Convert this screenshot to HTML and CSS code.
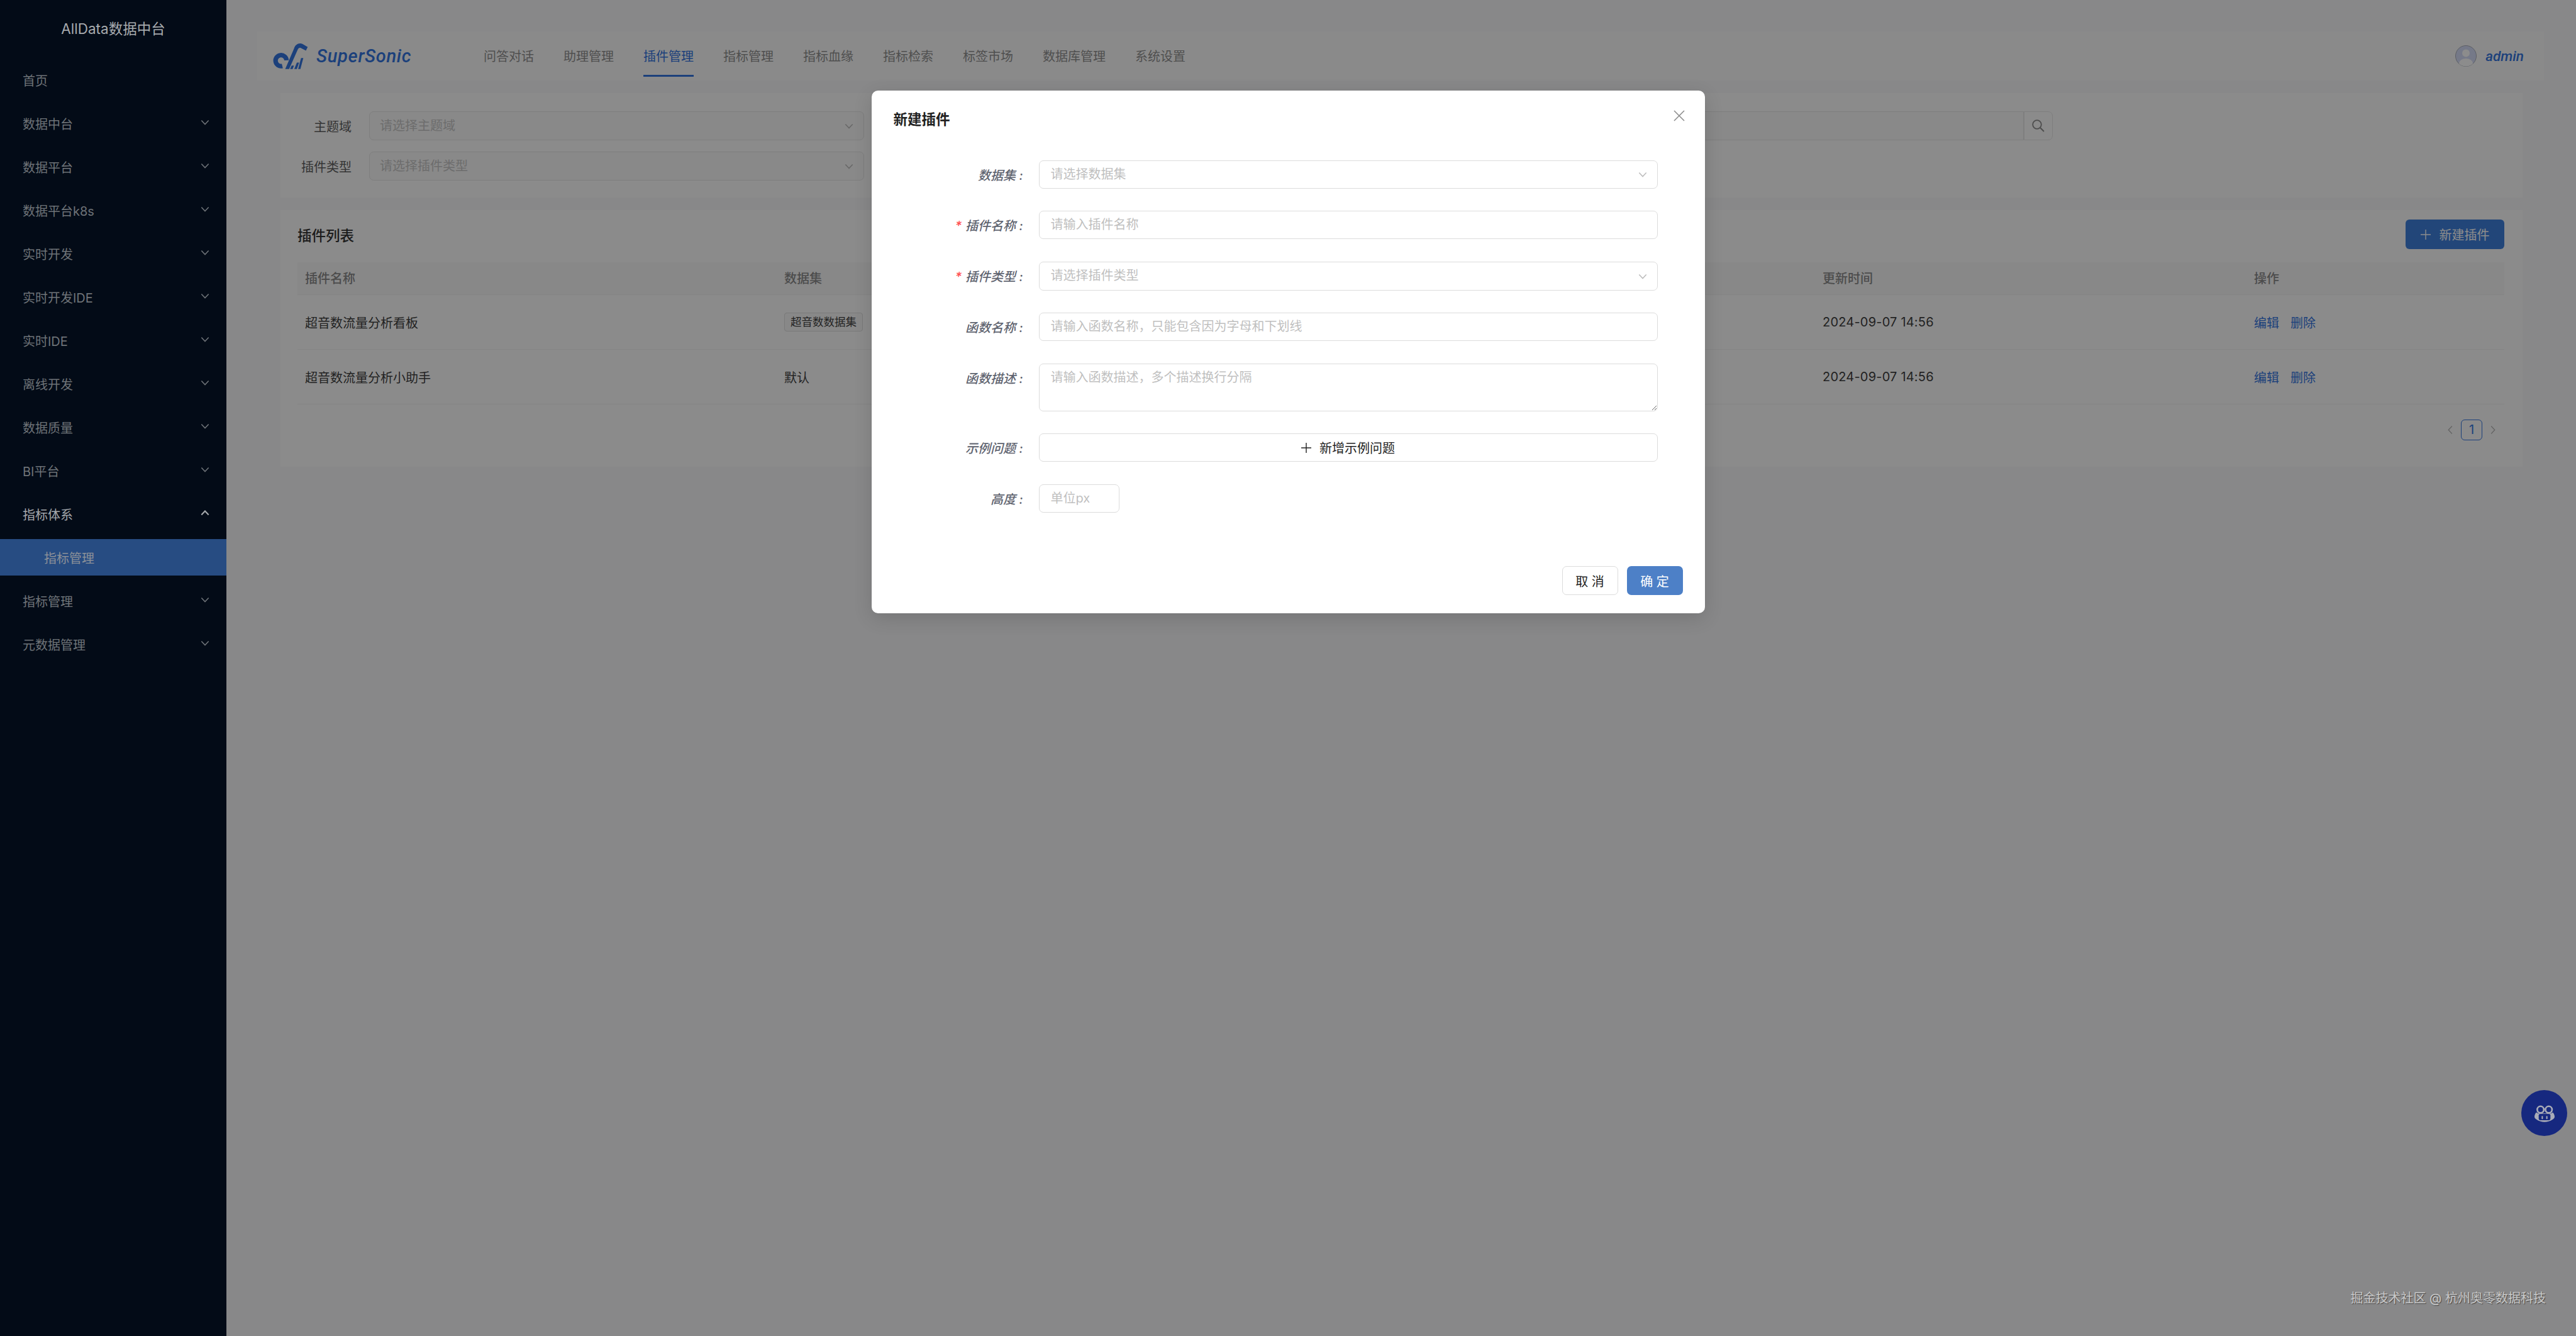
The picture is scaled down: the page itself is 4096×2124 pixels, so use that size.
FILE: index.html
```html
<!DOCTYPE html>
<html lang="zh-CN">
<head>
    <meta charset="UTF-8">
    <title>AllData数据中台</title>
    <link rel="stylesheet" href="styles.css">
</head>
<body>
    <svg class="sprite" aria-hidden="true">
        <symbol id="down" viewBox="0 0 16 10"><path d="M1.5 1.5 8 8.5l6.5-7" fill="none" stroke="currentColor" stroke-width="1.8"/></symbol>
        <symbol id="up" viewBox="0 0 16 10"><path d="M1.5 8.5 8 1.5l6.5 7" fill="none" stroke="currentColor" stroke-width="2.4"/></symbol>
        <symbol id="plus" viewBox="0 0 16 16"><path d="M8 0v16M0 8h16" fill="none" stroke="currentColor" stroke-width="1.4"/></symbol>
    </svg>

    <aside class="sidebar">
        <div class="side-title">AllData数据中台</div>
        <div class="side-item">首页</div>
        <div class="side-item">数据中台<svg class="side-arrow"><use href="#down"/></svg></div>
        <div class="side-item">数据平台<svg class="side-arrow"><use href="#down"/></svg></div>
        <div class="side-item">数据平台k8s<svg class="side-arrow"><use href="#down"/></svg></div>
        <div class="side-item">实时开发<svg class="side-arrow"><use href="#down"/></svg></div>
        <div class="side-item">实时开发IDE<svg class="side-arrow"><use href="#down"/></svg></div>
        <div class="side-item">实时IDE<svg class="side-arrow"><use href="#down"/></svg></div>
        <div class="side-item">离线开发<svg class="side-arrow"><use href="#down"/></svg></div>
        <div class="side-item">数据质量<svg class="side-arrow"><use href="#down"/></svg></div>
        <div class="side-item">BI平台<svg class="side-arrow"><use href="#down"/></svg></div>
        <div class="side-item side-open">指标体系<svg class="side-arrow"><use href="#up"/></svg></div>
        <div class="side-item side-sub">指标管理</div>
        <div class="side-item">指标管理<svg class="side-arrow"><use href="#down"/></svg></div>
        <div class="side-item">元数据管理<svg class="side-arrow"><use href="#down"/></svg></div>
    </aside>

    <main class="main">
        <header class="header">
            <svg class="logo" viewBox="60 60 222 166">
                <path d="M122 203A34 34 0 1 1 148 168" fill="none" stroke="currentColor" stroke-width="28"/>
                <path d="M140 222 194 96C202 70 224 58 246 66L279 86 268 108 238 92C228 88 222 92 218 100L164 222Z" fill="currentColor"/>
                <path d="M170 222 180 200H194L186 222ZM196 222 212 182H226L212 222ZM220 222 238 154H252L234 222Z" fill="currentColor"/>
            </svg>
            <span class="brand">SuperSonic</span>
            <nav class="nav">
                <a class="nav-item">问答对话</a>
                <a class="nav-item">助理管理</a>
                <a class="nav-item nav-active">插件管理</a>
                <a class="nav-item">指标管理</a>
                <a class="nav-item">指标血缘</a>
                <a class="nav-item">指标检索</a>
                <a class="nav-item">标签市场</a>
                <a class="nav-item">数据库管理</a>
                <a class="nav-item">系统设置</a>
            </nav>
            <div class="user">
                <svg class="avatar" viewBox="0 0 34 34">
                    <defs><clipPath id="avatarClip"><circle cx="17" cy="17" r="16.5"/></clipPath></defs>
                    <circle cx="17" cy="17" r="16.5" fill="#d6dcf8" stroke="#a9aeb8"/>
                    <g clip-path="url(#avatarClip)" fill="#fff">
                        <circle cx="17" cy="12.5" r="6"/>
                        <ellipse cx="17" cy="29" rx="11" ry="8"/>
                    </g>
                </svg>
                <span class="user-name">admin</span>
            </div>
        </header>

        <section class="panel filter">
            <div class="filter-row">
                <label class="filter-label">主题域</label>
                <div class="filter-select">请选择主题域<svg class="select-arrow"><use href="#down"/></svg></div>
                <div class="filter-search">
                    <div class="search-input"></div>
                    <div class="search-btn">
                        <svg class="search-icon" viewBox="0 0 22 22"><circle cx="9" cy="9" r="6.8" fill="none" stroke="currentColor" stroke-width="1.8"/><path d="m14 14 6 6" stroke="currentColor" stroke-width="2"/></svg>
                    </div>
                </div>
            </div>
            <div class="filter-row">
                <label class="filter-label">插件类型</label>
                <div class="filter-select">请选择插件类型<svg class="select-arrow"><use href="#down"/></svg></div>
            </div>
        </section>

        <section class="panel list">
            <div class="list-head">
                <h2 class="list-title">插件列表</h2>
                <button class="new-btn"><svg class="plus"><use href="#plus"/></svg>新建插件</button>
            </div>
            <div class="table-row table-head">
                <div>插件名称</div><div>数据集</div><div>更新时间</div><div>操作</div>
            </div>
            <div class="table-row">
                <div>超音数流量分析看板</div>
                <div><span class="tag">超音数数据集</span></div>
                <div class="date">2024-09-07 14:56</div>
                <div class="ops"><a>编辑</a><a>删除</a></div>
            </div>
            <div class="table-row">
                <div>超音数流量分析小助手</div>
                <div>默认</div>
                <div class="date">2024-09-07 14:56</div>
                <div class="ops"><a>编辑</a><a>删除</a></div>
            </div>
            <div class="pager">
                <svg class="pager-arrow" viewBox="0 0 10 18"><path d="M8.5 1.5 1.5 9l7 7.5" fill="none" stroke="currentColor" stroke-width="1.6"/></svg>
                <span class="pager-num">1</span>
                <svg class="pager-arrow" viewBox="0 0 10 18"><path d="M1.5 1.5 8.5 9l-7 7.5" fill="none" stroke="currentColor" stroke-width="1.6"/></svg>
            </div>
        </section>

        <div class="mask"></div>

        <div class="fab">
            <svg class="fab-icon" viewBox="0 0 110 95">
                <circle cx="33" cy="27" r="18" fill="none" stroke="currentColor" stroke-width="9"/>
                <circle cx="78" cy="27" r="18" fill="none" stroke="currentColor" stroke-width="9"/>
                <path fill="currentColor" d="M10 42C2 50 0 60 0 66 0 72 4 76 12 82 26 91 40 95 55 95 70 95 84 91 98 82 106 76 110 72 110 66 110 60 108 50 100 42L90 48H20Z"/>
                <rect class="fab-face" x="23" y="51" width="64" height="34" rx="8"/>
                <rect fill="currentColor" x="39" y="62" width="7" height="17" rx="3"/>
                <rect fill="currentColor" x="64" y="62" width="7" height="17" rx="3"/>
            </svg>
        </div>
    </main>

    <div class="modal-wrap">
        <div class="modal">
            <h3 class="modal-title">新建插件</h3>
            <svg class="modal-close" viewBox="0 0 18 18"><path d="m1 1 16 16M17 1 1 17" fill="none" stroke="currentColor" stroke-width="1.6"/></svg>
            <div class="form">
                <div class="form-row">
                    <label class="form-label">数据集 :</label>
                    <div class="field">请选择数据集<svg class="select-arrow"><use href="#down"/></svg></div>
                </div>
                <div class="form-row">
                    <label class="form-label"><span class="star">*</span>插件名称 :</label>
                    <div class="field">请输入插件名称</div>
                </div>
                <div class="form-row">
                    <label class="form-label"><span class="star">*</span>插件类型 :</label>
                    <div class="field field-tall">请选择插件类型<svg class="select-arrow"><use href="#down"/></svg></div>
                </div>
                <div class="form-row">
                    <label class="form-label">函数名称 :</label>
                    <div class="field">请输入函数名称，只能包含因为字母和下划线</div>
                </div>
                <div class="form-row">
                    <label class="form-label">函数描述 :</label>
                    <div class="field field-area">请输入函数描述，多个描述换行分隔</div>
                </div>
                <div class="form-row">
                    <label class="form-label">示例问题 :</label>
                    <button class="add-btn"><svg class="plus"><use href="#plus"/></svg>新增示例问题</button>
                </div>
                <div class="form-row">
                    <label class="form-label">高度 :</label>
                    <div class="field field-small">单位px</div>
                </div>
            </div>
            <div class="modal-foot">
                <button class="foot-btn">取 消</button>
                <button class="foot-btn foot-primary">确 定</button>
            </div>
        </div>
    </div>

    <div class="watermark">掘金技术社区 @ 杭州奥零数据科技</div>
</body>
</html>
```

FILE: styles.css
```css
* {
    box-sizing: border-box;
}
html, body {
    margin: 0;
    height: 100%;
}
body {
    width: 4096px;
    height: 2124px;
    display: flex;
    position: relative;
    overflow: hidden;
    font-family: "Inter", "Noto Sans CJK SC", sans-serif;
    font-size: 20px;
    color: #3f3f3f;
    background: #f7f8fa;
}
.sprite {
    display: none;
}
button {
    font: inherit;
    cursor: pointer;
}

/* sidebar */
.sidebar {
    width: 360px;
    flex: none;
    background: #030b17;
    color: #6e7378;
    display: flex;
    flex-direction: column;
    gap: 11px;
}
.side-title {
    height: 87px;
    line-height: 92px;
    text-align: center;
    font-size: 22.5px;
    color: #a8abaf;
}
.side-item {
    height: 58px;
    flex: none;
    padding-left: 36px;
    display: flex;
    align-items: center;
    position: relative;
}
.side-open {
    color: #a5a8ac;
}
.side-sub {
    padding-left: 70px;
    background: #274c82;
    color: #8b9098;
}
.side-arrow {
    width: 14px;
    height: 9px;
    position: absolute;
    right: 27px;
    top: 23px;
}

/* main area, dimmed by the mask */
.main {
    flex: 1;
    position: relative;
    height: 2124px;
}
.mask {
    position: absolute;
    inset: 0;
    background: rgba(0, 0, 0, 0.45);
}
.header {
    height: 78px;
    margin: 50px 51px 0 49px;
    padding: 0 32px 0 24px;
    background: #fcfcfc;
    display: flex;
    align-items: center;
}
.logo {
    width: 57px;
    height: 43px;
    color: #3375e0;
    flex: none;
}
.brand {
    margin-left: 13px;
    width: 153px;
    font-size: 29px;
    font-style: italic;
    font-weight: 500;
    letter-spacing: 0.7px;
    color: #3375e0;
    font-family: "Roboto", sans-serif;
}
.nav {
    margin-left: 113px;
    margin-top: 4px;
    display: flex;
    gap: 47px;
}
.nav-item {
    height: 62px;
    padding-top: 2px;
    line-height: 57px;
    color: #909090;
    border-bottom: 3px solid transparent;
}
.nav-active {
    color: #3375e0;
    border-bottom-color: #3375e0;
}
.user {
    margin-left: auto;
    display: flex;
    align-items: center;
    gap: 14px;
}
.avatar {
    width: 34px;
    height: 34px;
}
.user-name {
    font-size: 22.5px;
    font-style: italic;
    font-weight: 500;
    color: #3375e0;
    font-family: "Roboto", sans-serif;
}

.panel {
    margin: 20px 85px 0 86px;
    background: #fdfdfd;
}
.filter {
    height: 166px;
    padding-top: 29px;
    display: flex;
    flex-direction: column;
    gap: 18px;
}
.filter-row {
    display: flex;
    align-items: center;
    height: 46px;
}
.filter-label {
    width: 113px;
    text-align: right;
    margin-right: 28px;
    color: #606060;
}
.filter-select {
    width: 787px;
    height: 46px;
    padding-left: 16px;
    line-height: 44px;
    border: 1px solid #e6e6e6;
    border-radius: 7px;
    background: #f9f9f9;
    color: #c6c6c6;
    position: relative;
}
.filter-search {
    margin-left: 20px;
    width: 1870px;
    display: flex;
}
.search-input {
    flex: 1;
    height: 46px;
    border: 1px solid #e6e6e6;
    background: #f9f9f9;
}
.search-btn {
    width: 46px;
    height: 46px;
    border: 1px solid #e6e6e6;
    border-radius: 0 7px 7px 0;
    display: flex;
    align-items: center;
    justify-content: center;
    color: #8c8c8c;
}
.search-icon {
    width: 22px;
    height: 22px;
}
.select-arrow {
    width: 14px;
    height: 9px;
    color: #bdbdbd;
    position: absolute;
    right: 16px;
    top: 50%;
    margin-top: -4px;
}

/* table */
.list {
    height: 408px;
    padding: 15px 29px 0 27px;
}
.list-head {
    height: 47px;
    margin-bottom: 21px;
    display: flex;
    align-items: center;
    justify-content: space-between;
}
.list-title {
    margin: 0;
    font-size: 22.5px;
    font-weight: 500;
    color: #333;
}
.new-btn {
    width: 157px;
    height: 47px;
    border: 0;
    border-radius: 6px;
    background: #3f80dc;
    color: #fff;
    display: flex;
    align-items: center;
    justify-content: center;
    gap: 14px;
}
.plus {
    width: 16px;
    height: 16px;
}
.table-row {
    display: grid;
    grid-template-columns: 762px 1651px 686px 410px;
    align-items: center;
    height: 87px;
    border-bottom: 1px solid #f0f0f0;
}
.table-row > div {
    padding-left: 12px;
}
.table-head {
    height: 52px;
    padding-bottom: 3px;
    background: #f8f8f8;
    font-weight: 500;
    color: #8a8a8a;
}
.tag {
    display: inline-block;
    height: 30px;
    width: 125px;
    line-height: 28px;
    text-align: center;
    font-size: 17.5px;
    background: #f8f8f8;
    border: 1px solid #dcdcdc;
    border-radius: 4px;
}
.date {
    letter-spacing: 0.2px;
}
.ops {
    display: flex;
    gap: 18px;
    color: #3375e0;
}
.pager {
    margin-top: 24px;
    padding-right: 14px;
    display: flex;
    align-items: center;
    justify-content: flex-end;
    gap: 13px;
    color: #b5b5b5;
}
.pager-arrow {
    width: 8px;
    height: 15px;
}
.pager-num {
    width: 34px;
    height: 33px;
    line-height: 31px;
    text-align: center;
    border: 1px solid #3375e0;
    border-radius: 6px;
    color: #3375e0;
}

.fab {
    position: absolute;
    right: 14px;
    top: 1733px;
    width: 73px;
    height: 73px;
    border-radius: 50%;
    background: #16287f;
    display: flex;
    align-items: center;
    justify-content: center;
    color: #a9acb8;
}
.fab-icon {
    width: 32px;
    height: 28px;
}
.fab-face {
    fill: #16287f;
}

/* modal */
.modal-wrap {
    position: absolute;
    inset: 0;
    padding-top: 144px;
    display: flex;
    justify-content: center;
    align-items: flex-start;
}
.modal {
    width: 1325px;
    height: 831px;
    background: #fff;
    border-radius: 10px;
    box-shadow: 0 8px 30px rgba(0, 0, 0, 0.14);
    padding: 0 35px 29px;
    position: relative;
}
.modal-title {
    margin: 0;
    height: 110.5px;
    padding-top: 31px;
    line-height: 30px;
    font-size: 22.5px;
    font-weight: 600;
    color: #222;
}
.modal-close {
    position: absolute;
    top: 31px;
    right: 32px;
    width: 18px;
    height: 18px;
    color: #8c8c8c;
}
.form {
    height: 645.5px;
    margin-left: -35px;
}
.form-row {
    display: grid;
    grid-template-columns: 241px 984px;
    column-gap: 25px;
    margin-bottom: 35.5px;
    align-items: start;
}
.form-label {
    height: 45px;
    text-align: right;
    line-height: 49px;
    font-style: italic;
    font-weight: 500;
    color: #5f6470;
    white-space: nowrap;
}
.star {
    color: #ff4d4f;
    margin-right: 6px;
}
.field {
    height: 45px;
    line-height: 43px;
    padding-left: 18px;
    border: 1px solid #dcdcdc;
    border-radius: 7px;
    color: #bfbfbf;
    position: relative;
}
.field-tall {
    height: 46px;
}
.field-area {
    height: 76px;
    resize: both;
    overflow: auto;
}
.field-small {
    width: 128px;
}
.add-btn {
    height: 45px;
    border: 1px solid #dcdcdc;
    border-radius: 7px;
    background: #fff;
    color: #222;
    display: flex;
    align-items: center;
    justify-content: center;
    gap: 13px;
}
.modal-foot {
    display: flex;
    justify-content: flex-end;
    gap: 14px;
}
.foot-btn {
    width: 89px;
    height: 46px;
    border: 1px solid #dcdcdc;
    border-radius: 7px;
    background: #fff;
    color: #222;
    padding: 0;
}
.foot-primary {
    border: 0;
    background: #4d80c7;
    color: #fff;
}

.watermark {
    position: absolute;
    right: 48px;
    top: 2050px;
    line-height: 28px;
    color: #c9c9c9;
    text-shadow: 1px 1px 1px rgba(0, 0, 0, 0.5);
}
```
